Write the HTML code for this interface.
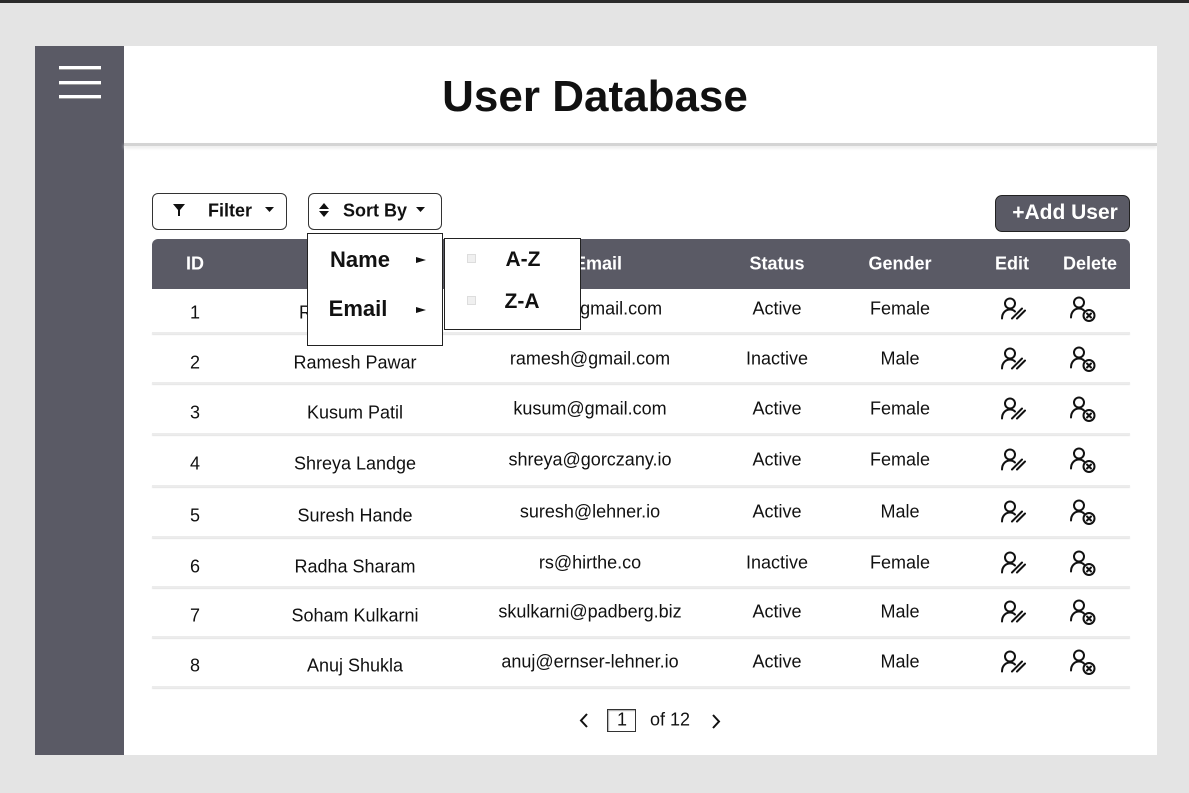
<!DOCTYPE html>
<html><head><style>
*{margin:0;padding:0;box-sizing:border-box}
body{width:1189px;height:793px;background:#e4e4e4;position:relative;overflow:hidden;font-family:"Liberation Sans",Arial,sans-serif;color:#111}
.a{position:absolute}
.t{position:absolute;transform:translate(-50%,-50%);white-space:nowrap;font-size:18px}
.h{color:#fff;font-weight:bold;font-size:18px}
.line{position:absolute;left:152px;width:978px;height:2px;background:#ececec;box-shadow:0 1px 1px #e4e4e4}
.ham{position:absolute;left:59px;width:42px;height:4px;background:#fff;border-bottom:1px solid #999}
</style></head><body>
<div class="a" style="left:0;top:0;width:1189px;height:3px;background:#2b2b2b"></div>
<div class="a" style="left:35px;top:46px;width:89px;height:709px;background:#5a5a65"></div>
<div class="ham" style="top:66px"></div><div class="ham" style="top:81px"></div><div class="ham" style="top:95px"></div>
<div class="a" style="left:124px;top:46px;width:1033px;height:709px;background:#fff"></div>
<div class="a" style="left:124px;top:143px;width:1033px;height:3px;background:#d4d4d4;box-shadow:0 2px 3px #e8e8e8"></div>
<div class="t" style="left:595px;top:97px;font-size:44px;font-weight:bold">User Database</div>

<div class="a" style="left:152px;top:193px;width:135px;height:37px;border:1px solid #333;border-radius:6px"></div>
<svg class="a" style="left:173px;top:204px" width="12" height="12" viewBox="0 0 12 12"><path d="M0 0H12L7 6V12H5V6Z" fill="#111"/></svg>
<div class="t" style="left:230px;top:211px;font-weight:bold">Filter</div>
<svg class="a" style="left:265px;top:207px" width="9" height="6"><path d="M0 0H9L4.5 5Z" fill="#111"/></svg>

<div class="a" style="left:308px;top:193px;width:134px;height:37px;border:1px solid #333;border-radius:6px"></div>
<svg class="a" style="left:319px;top:203px" width="10" height="14"><path d="M0 6L5 0L10 6ZM0 8L5 14L10 8Z" fill="#111"/></svg>
<div class="t" style="left:375px;top:211px;font-weight:bold">Sort By</div>
<svg class="a" style="left:416px;top:207px" width="9" height="6"><path d="M0 0H9L4.5 5Z" fill="#111"/></svg>

<div class="a" style="left:995px;top:195px;width:135px;height:37px;background:#5a5a65;border:1px solid #222;border-radius:7px"></div>
<div class="t h" style="left:1065px;top:213px;font-size:21px">+Add User</div>

<div class="a" style="left:152px;top:239px;width:978px;height:50px;background:#5a5a65;border-radius:6px 6px 0 0"></div>
<div class="t h" style="left:195px;top:264px">ID</div>
<div class="t h" style="left:598px;top:264px">Email</div>
<div class="t h" style="left:777px;top:264px">Status</div>
<div class="t h" style="left:900px;top:264px">Gender</div>
<div class="t h" style="left:1012px;top:264px">Edit</div>
<div class="t h" style="left:1090px;top:264px">Delete</div>

<div id="rows"></div>
<script>
var d=[["1","Rupali Shinde","rupali@gmail.com","Active","Female"],["2","Ramesh Pawar","ramesh@gmail.com","Inactive","Male"],["3","Kusum Patil","kusum@gmail.com","Active","Female"],["4","Shreya Landge","shreya@gorczany.io","Active","Female"],["5","Suresh Hande","suresh@lehner.io","Active","Male"],["6","Radha Sharam","rs@hirthe.co","Inactive","Female"],["7","Soham Kulkarni","skulkarni@padberg.biz","Active","Male"],["8","Anuj Shukla","anuj@ernser-lehner.io","Active","Male"]];
var y=[313,363,413,464,516,567,616,666],L=[332,382,433,485,536,586,636,686],h="";
var ed='<svg width="28" height="26" viewBox="0 0 28 26" fill="none" stroke="#111" stroke-width="2" stroke-linecap="round"><circle cx="10" cy="7" r="5"/><path d="M2 22C2 16 6 13 10 13C12 13 14 14 15 15"/><path d="M12 22L22 12M17 22L25 14"/></svg>';
var de='<svg width="28" height="28" viewBox="0 0 28 28" fill="none" stroke="#111" stroke-width="2" stroke-linecap="round"><circle cx="10" cy="7" r="5"/><path d="M2 22C2 16 6 13 10 13C12 13 14 14 15 15"/><circle cx="20" cy="20" r="5.5"/><path d="M18 18L22 22M22 18L18 22"/></svg>';
for(var i=0;i<8;i++){var r=d[i];
h+='<div class="t" style="left:195px;top:'+y[i]+'px">'+r[0]+'</div><div class="t" style="left:355px;top:'+y[i]+'px">'+r[1]+'</div><div class="t" style="left:590px;top:'+(y[i]-4)+'px">'+r[2]+'</div><div class="t" style="left:777px;top:'+(y[i]-4)+'px">'+r[3]+'</div><div class="t" style="left:900px;top:'+(y[i]-4)+'px">'+r[4]+'</div>';
h+='<div class="t" style="left:1014px;top:'+(y[i]-1)+'px">'+ed+'</div><div class="t" style="left:1083px;top:'+(y[i]-1)+'px">'+de+'</div><div class="line" style="top:'+L[i]+'px"></div>';}
document.getElementById('rows').innerHTML=h;
</script>

<div class="a" style="left:307px;top:233px;width:136px;height:113px;background:#fff;border:1px solid #222"></div>
<div class="t" style="left:360px;top:260px;font-size:22px;font-weight:bold">Name</div>
<div class="t" style="left:358px;top:309px;font-size:22px;font-weight:bold">Email</div>
<svg class="a" style="left:416px;top:257px" width="10" height="6"><path d="M0 0L10 3L0 6Z" fill="#111"/></svg>
<svg class="a" style="left:416px;top:307px" width="10" height="6"><path d="M0 0L10 3L0 6Z" fill="#111"/></svg>
<div class="a" style="left:444px;top:238px;width:137px;height:92px;background:#fff;border:1px solid #222"></div>
<div class="a" style="left:467px;top:254px;width:9px;height:9px;background:#f0f0f0;border:1px solid #ddd"></div>
<div class="a" style="left:467px;top:296px;width:9px;height:9px;background:#f0f0f0;border:1px solid #ddd"></div>
<div class="t" style="left:523px;top:260px;font-size:21px;font-weight:bold">A-Z</div>
<div class="t" style="left:522px;top:302px;font-size:21px;font-weight:bold">Z-A</div>

<svg class="a" style="left:579px;top:713px" width="10" height="15"><path d="M8 1L2 7.5L8 14" fill="none" stroke="#111" stroke-width="2"/></svg>
<div class="a" style="left:607px;top:709px;width:29px;height:23px;border:1px solid #333;box-shadow:inset 1px 1px 1px #aaa"></div>
<div class="t" style="left:622px;top:720px">1</div>
<div class="t" style="left:670px;top:720px">of 12</div>
<svg class="a" style="left:711px;top:714px" width="10" height="15"><path d="M2 1L8 7.5L2 14" fill="none" stroke="#111" stroke-width="2"/></svg>
</body></html>
